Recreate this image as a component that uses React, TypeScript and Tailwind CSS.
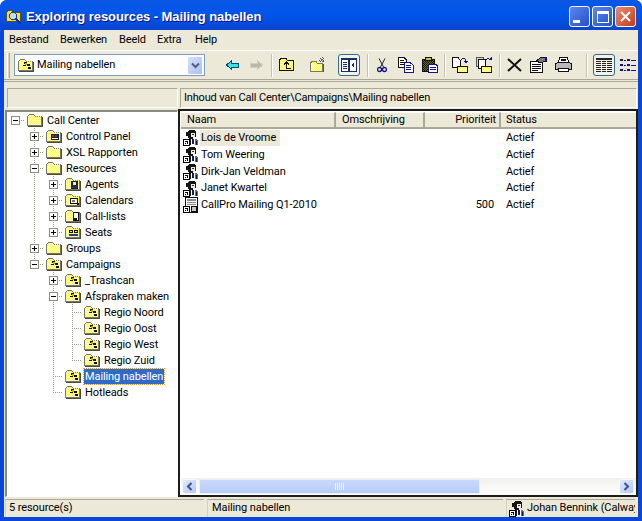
import React from 'react';

const ui = "font-['Roboto',sans-serif] text-[11px] tracking-[-0.1px] text-black";

// pixel checker used for the old 16 colour folder fill
function checker(x0: number, y0: number, w: number, h: number) {
  let d = '';
  for (let y = y0; y < y0 + h; y++) {
    for (let x = x0; x < x0 + w; x++) {
      if ((x + y) % 2 === 0) d += `M${x} ${y}h1v1h-1z`;
    }
  }
  return d;
}

const folderDither = checker(1, 3, 13, 9);
const tabDither = checker(3, 2, 4, 1);
const yellow = '#ffff58';
const pale = '#ffffb8';

type Overlay = 'none' | 'panel' | 'agents' | 'calendars' | 'lists' | 'seats' | 'campaign';

function Folder({ overlay = 'none' }: { overlay?: Overlay }) {
  return (
    <svg width="16" height="14" viewBox="0 0 16 14" shapeRendering="crispEdges" className="shrink-0">
      <path d="M0.5 3.5 L2.5 1.5 H6.5 L8.5 3.5 H14.5 V12.5 H0.5 Z" fill={yellow} stroke="#77776a" />
      <path d={folderDither} fill={pale} />
      <path d={tabDither} fill={pale} />
      <rect x="1" y="13" width="15" height="1" fill="#4a4a40" />
      <rect x="15" y="4" width="1" height="9" fill="#4a4a40" />
      {overlay === 'panel' && (
        <g>
          <rect x="5" y="5" width="8" height="6" fill="#222" />
          <rect x="6" y="6" width="2" height="2" fill="#d22" />
          <rect x="9" y="6" width="2" height="2" fill="#2a48c8" />
          <rect x="6" y="9" width="6" height="1" fill="#fff" />
        </g>
      )}
      {overlay === 'agents' && (
        <g>
          <rect x="6" y="4" width="7" height="8" fill="#222" />
          <rect x="8" y="5" width="3" height="3" fill="#f2e6cc" />
          <rect x="7" y="9" width="5" height="2" fill="#20307a" />
        </g>
      )}
      {overlay === 'calendars' && (
        <g>
          <rect x="5.5" y="5.5" width="7" height="5" fill={pale} stroke="#111" />
          <rect x="7" y="7" width="3" height="2" fill="#777" />
          <rect x="12" y="10" width="2" height="2" fill="#111" />
        </g>
      )}
      {overlay === 'lists' && (
        <g>
          <rect x="8.5" y="3.5" width="5" height="8" fill="#fff" stroke="#111" />
          <rect x="9" y="9" width="3" height="2" fill="#111" />
        </g>
      )}
      {overlay === 'seats' && (
        <g>
          <rect x="4" y="5" width="4" height="3" fill="#111" />
          <rect x="9" y="5" width="4" height="3" fill="#111" />
          <rect x="5" y="6" width="2" height="1" fill="#ffe040" />
          <rect x="10" y="6" width="2" height="1" fill="#ffe040" />
          <rect x="4" y="9" width="9" height="2" fill="#2a3a98" />
        </g>
      )}
      {overlay === 'campaign' && (
        <g>
          <rect x="6" y="4" width="3" height="2" fill="#111" />
          <rect x="9" y="6" width="3" height="2" fill="#111" />
          <rect x="5" y="7" width="3" height="1" fill="#111" />
          <rect x="10" y="9" width="3" height="2" fill="#111" />
          <rect x="7" y="5" width="2" height="2" fill="#c8b020" />
        </g>
      )}
    </svg>
  );
}

type Guide = 'blank' | 'pipe' | 'tee' | 'corner';

// one 19px wide column of the tree's dotted lines, optionally with the +/- box on it
function TreeCell({ guide, box, rootTail }: { guide: Guide; box?: '+' | '-'; rootTail?: boolean }) {
  const vert = guide === 'pipe' || guide === 'tee' || guide === 'corner';
  const bottom = guide === 'pipe' || guide === 'tee';
  const dash = { stroke: '#9a9a8c', strokeDasharray: '1 1', shapeRendering: 'crispEdges' as const };
  return (
    <svg width="19" height="16" viewBox="0 0 19 16" className="shrink-0 block">
      {vert && <line x1="9.5" y1="0" x2="9.5" y2={bottom ? 16 : 8} {...dash} />}
      {guide !== 'blank' && guide !== 'pipe' && <line x1="9" y1="8.5" x2="21" y2="8.5" {...dash} />}
      {rootTail && <line x1="9" y1="8.5" x2="21" y2="8.5" {...dash} />}
      {box && (
        <g shapeRendering="crispEdges">
          <rect x="5.5" y="4.5" width="8" height="8" fill="#fff" stroke="#8f8f80" />
          <rect x="7" y="8" width="5" height="1" fill="#000" />
          {box === '+' && <rect x="9" y="6" width="1" height="5" fill="#000" />}
        </g>
      )}
    </svg>
  );
}

type TreeRow = {
  label: string;
  guides: Guide[];
  box?: '+' | '-';
  overlay?: Overlay;
  selected?: boolean;
};

const rows: TreeRow[] = [
  { label: 'Call Center', guides: ['blank'], box: '-' },
  { label: 'Control Panel', guides: ['blank', 'tee'], box: '+', overlay: 'panel' },
  { label: 'XSL Rapporten', guides: ['blank', 'tee'], box: '+' },
  { label: 'Resources', guides: ['blank', 'tee'], box: '-' },
  { label: 'Agents', guides: ['blank', 'pipe', 'tee'], box: '+', overlay: 'agents' },
  { label: 'Calendars', guides: ['blank', 'pipe', 'tee'], box: '+', overlay: 'calendars' },
  { label: 'Call-lists', guides: ['blank', 'pipe', 'tee'], box: '+', overlay: 'lists' },
  { label: 'Seats', guides: ['blank', 'pipe', 'corner'], box: '+', overlay: 'seats' },
  { label: 'Groups', guides: ['blank', 'tee'], box: '+' },
  { label: 'Campaigns', guides: ['blank', 'corner'], box: '-', overlay: 'campaign' },
  { label: '_Trashcan', guides: ['blank', 'blank', 'tee'], box: '+', overlay: 'campaign' },
  { label: 'Afspraken maken', guides: ['blank', 'blank', 'tee'], box: '-', overlay: 'campaign' },
  { label: 'Regio Noord', guides: ['blank', 'blank', 'pipe', 'tee'], overlay: 'campaign' },
  { label: 'Regio Oost', guides: ['blank', 'blank', 'pipe', 'tee'], overlay: 'campaign' },
  { label: 'Regio West', guides: ['blank', 'blank', 'pipe', 'tee'], overlay: 'campaign' },
  { label: 'Regio Zuid', guides: ['blank', 'blank', 'pipe', 'corner'], overlay: 'campaign' },
  { label: 'Mailing nabellen', guides: ['blank', 'blank', 'tee'], overlay: 'campaign', selected: true },
  { label: 'Hotleads', guides: ['blank', 'blank', 'corner'], overlay: 'campaign' },
];

function Tree() {
  return (
    <div className="flex-1 min-h-0 -ml-[1px] bg-white border-t-2 border-l-2 border-t-[#8a8a7c] border-l-[#8a8a7c] border-r border-b border-r-white border-b-white overflow-hidden">
      {rows.map((r, i) => (
        <div key={r.label} className="flex items-center h-4 -ml-[1px] whitespace-nowrap">
          {r.guides.map((g, j) => {
            const last = j === r.guides.length - 1;
            return <TreeCell key={j} guide={g} box={last ? r.box : undefined} rootTail={i === 0 && last} />;
          })}
          <div className="ml-[2px] mr-[3px]">
            <Folder overlay={r.overlay} />
          </div>
          <span
            className={
              r.selected
                ? 'px-[1px] h-[15px] leading-[15px] bg-[#316ac5] text-white outline-1 outline-dotted outline-[#e0a030]'
                : 'px-[1px] h-[15px] leading-[15px]'
            }
          >
            {r.label}
          </span>
        </div>
      ))}
    </div>
  );
}

function ShortcutArrow() {
  return (
    <g shapeRendering="crispEdges">
      <rect x="0.5" y="9.5" width="6" height="6" fill="#fff" stroke="#000" />
      <rect x="2" y="11" width="3" height="1" fill="#000" />
      <rect x="4" y="11" width="1" height="3" fill="#000" />
      <rect x="2" y="13" width="1" height="1" fill="#000" />
    </g>
  );
}

function AgentIcon() {
  return (
    <svg width="16" height="16" viewBox="0 0 16 16" shapeRendering="crispEdges" className="shrink-0">
      <path d="M6 0 H12 V1 H13 V7 H11 V9 H6 V8 H5 V6 H3 V2 H5 V1 H6 Z" fill="#141414" />
      <rect x="8" y="3" width="4" height="4" fill="#f4ecd8" />
      <rect x="9" y="4" width="2" height="1" fill="#333" />
      <rect x="10" y="7" width="1" height="2" fill="#f4ecd8" />
      <path d="M4 9 H14 L15 11 V15 H4 Z" fill="#6a6a78" />
      <rect x="8" y="9" width="4" height="6" fill="#fff" />
      <rect x="9" y="9" width="2" height="5" fill="#141c60" />
      <rect x="4" y="9" width="4" height="6" fill="#1a1a24" />
      <rect x="13" y="11" width="1" height="4" fill="#1a1a24" />
      <ShortcutArrow />
    </svg>
  );
}

function MailingIcon() {
  return (
    <svg width="16" height="16" viewBox="0 0 16 16" shapeRendering="crispEdges" className="shrink-0">
      <rect x="2.5" y="0.5" width="12" height="15" fill="#fff" stroke="#111" />
      <rect x="4" y="2" width="9" height="2" fill="#8a8a8a" />
      <rect x="4" y="5" width="9" height="1" fill="#8a8a8a" />
      <rect x="4" y="7" width="9" height="1" fill="#8a8a8a" />
      <rect x="8" y="9.5" width="5" height="5" fill="#c8c8c8" stroke="#111" />
      <ShortcutArrow />
    </svg>
  );
}

const people = ['Lois de Vroome', 'Tom Weering', 'Dirk-Jan Veldman', 'Janet Kwartel'];

function ListRow({ name, prio, icon, active }: { name: string; prio?: string; icon: React.ReactNode; active?: boolean }) {
  return (
    <div className="flex items-center h-[16.75px]">
      <div className="w-[154px] pl-[2px] flex items-center shrink-0">
        {icon}
        <span className={active ? 'ml-[1px] pl-[1px] pr-[4px] h-4 leading-4 bg-[#ece9d8]' : 'ml-[1px] pl-[1px]'}>{name}</span>
      </div>
      <div className="w-[89px] shrink-0" />
      <div className="w-[75px] shrink-0 text-right pr-[5px]">{prio}</div>
      <div className="pl-[7px]">Actief</div>
    </div>
  );
}

function HeaderCell({ label, w, right }: { label: string; w: string; right?: boolean }) {
  return (
    <div
      className={`${w} ${right ? 'justify-end pr-[3px]' : 'pl-[6px]'} shrink-0 h-full flex items-center border-r-2 border-r-[#aca899] border-t border-t-white`}
    >
      {label}
    </div>
  );
}

function ScrollButton({ dir }: { dir: 'l' | 'r' }) {
  return (
    <div className="w-[15px] h-[15px] shrink-0 rounded-[2px] bg-gradient-to-br from-[#e1eafe] to-[#b4c8f6] border border-[#f4f7fe] flex items-center justify-center">
      <svg width="7" height="9" viewBox="0 0 7 9">
        <path d={dir === 'l' ? 'M5.5 1 L2 4.5 L5.5 8' : 'M1.5 1 L5 4.5 L1.5 8'} fill="none" stroke="#3d5387" strokeWidth="2" />
      </svg>
    </div>
  );
}

function List() {
  return (
    <div className="flex-1 min-h-0 -ml-[2px] flex flex-col bg-white border-2 border-[#1c1c1c] pt-[1px] pl-[1px]">
      <div className="h-[17px] flex bg-[#ece9d8] border-b-2 border-b-[#aca899] shrink-0">
        <HeaderCell label="Naam" w="w-[155px]" />
        <HeaderCell label="Omschrijving" w="w-[89px]" />
        <HeaderCell label="Prioriteit" w="w-[76px]" right />
        <div className="pl-[5px] flex items-center border-t border-t-white flex-1">Status</div>
      </div>
      <div className="flex-1 min-h-0 pt-[1px]">
        {people.map((p, i) => (
          <ListRow key={p} name={p} icon={<AgentIcon />} active={i === 0} />
        ))}
        <ListRow name="CallPro Mailing Q1-2010" prio="500" icon={<MailingIcon />} />
      </div>
      <div className="h-[17px] shrink-0 flex items-center gap-[2px] pl-[1px] pr-[2px] bg-gradient-to-b from-[#f3f1ec] to-[#fefefb]">
        <ScrollButton dir="l" />
        <div className="w-[281px] h-[15px] rounded-[2px] bg-gradient-to-b from-[#c9d8fb] to-[#b8cdf8] border border-[#e8eefc] flex items-center justify-center gap-[1px]">
          {[0, 1, 2, 3, 4].map(i => (
            <span key={i} className="w-[1px] h-[7px] bg-[#eef3ff]" />
          ))}
        </div>
        <div className="flex-1" />
        <ScrollButton dir="r" />
      </div>
    </div>
  );
}

function Sep({ ml, mr }: { ml: string; mr: string }) {
  return <div className={`${ml} ${mr} w-[2px] h-[23px] shrink-0 bg-[#c5c2b0] border-r border-r-white`} />;
}

function ToggleBtn({ children, ml }: { children: React.ReactNode; ml: string }) {
  return (
    <div className={`${ml} w-[22px] h-[22px] shrink-0 rounded-[3px] border border-[#2f6a94] bg-[#f4f2e8] flex items-center justify-center`}>
      {children}
    </div>
  );
}

function Ico({ ml, w = 16, children }: { ml: string; w?: number; children: React.ReactNode }) {
  return (
    <svg width={w} height="16" viewBox={`0 0 ${w} 16`} shapeRendering="crispEdges" className={`${ml} shrink-0`}>
      {children}
    </svg>
  );
}

const smallDither = checker(6, 11, 9, 4);

function Toolbar() {
  return (
    <div className="h-[32px] flex items-center shrink-0 border-t border-t-white border-b-[3px] border-double border-b-[#aca899]">
      <div className="ml-[3px] w-[3px] h-[25px] border-l border-l-white border-r border-r-[#aca899] bg-[#d8d4c0] shrink-0" />
      <div className="ml-[4px] w-[191px] h-[22px] shrink-0 bg-white border border-[#7f9db9] flex items-center">
        <div className="ml-[3px] mr-[3px]">
          <Folder overlay="campaign" />
        </div>
        <span className="flex-1">Mailing nabellen</span>
        <div className="w-[16px] h-[19px] mr-[1px] rounded-[2px] bg-gradient-to-br from-[#d5e0fb] to-[#aebff0] border border-white flex items-center justify-center">
          <svg width="9" height="7" viewBox="0 0 9 7">
            <path d="M1 1.5 L4.5 5 L8 1.5" fill="none" stroke="#4d6185" strokeWidth="2" />
          </svg>
        </div>
      </div>

      {/* back / forward */}
      <svg width="13" height="10" viewBox="0 0 13 10" shapeRendering="crispEdges" className="ml-[21px] shrink-0">
        <path d="M0.5 5 L5.5 0.5 V3 H12.5 V7 H5.5 V9.5 Z" fill="#36e4e4" stroke="#004a78" />
      </svg>
      <svg width="13" height="10" viewBox="0 0 13 10" shapeRendering="crispEdges" className="ml-[11px] shrink-0">
        <path d="M12.5 5 L7.5 0.5 V3 H0.5 V7 H7.5 V9.5 Z" fill="#b9b7a6" stroke="#d0cebe" />
      </svg>
      <Sep ml="ml-[8px]" mr="mr-[6px]" />

      <Ico ml="">
        <path d="M0.5 3 L2 1.5 H7 L8 3 H14.5 V13.5 H0.5 Z" fill={yellow} stroke="#111" />
        <path d={checker(1, 4, 13, 9)} fill={pale} />
        <path d="M7.5 11.5 V5 M5 7.5 L7.5 5 L10 7.5 M7 11.5 H12" stroke="#111" fill="none" />
      </Ico>
      <Ico ml="ml-[15px]">
        <path d="M0.5 6 L2 4.5 H6 L7 6 H12.5 V14.5 H0.5 Z" fill={yellow} stroke="#77776a" />
        <path d={checker(1, 7, 11, 7)} fill={pale} />
        <rect x="13" y="7" width="1" height="8" fill="#555" />
        <path d="M12 0 V6 M9 3 H15 M10 1 L14 5 M14 1 L10 5" stroke="#555" strokeDasharray="1 1" />
      </Ico>
      <ToggleBtn ml="ml-[12px]">
        <svg width="16" height="14" viewBox="0 0 16 14" shapeRendering="crispEdges">
          <rect x="0.5" y="0.5" width="15" height="13" fill="#fff" stroke="#1c2f6c" strokeWidth="1" />
          <rect x="0" y="0" width="16" height="2" fill="#1c2f6c" />
          <rect x="7" y="0" width="2" height="14" fill="#1c2f6c" />
          <path d="M2 4 H6 M2 6 H6 M2 8 H6 M2 10 H6" stroke="#1c2f6c" />
          <path d="M13 4 V10 L10 7 Z" fill="#1c2f6c" />
        </svg>
      </ToggleBtn>
      <Sep ml="ml-[7px]" mr="mr-[7px]" />

      <svg width="10" height="15" viewBox="0 0 10 15" className="ml-[1px] shrink-0">
        <path d="M2 0.5 L6.5 9 M8 0.5 L3.5 9" stroke="#222" fill="none" />
        <circle cx="2.5" cy="11.5" r="2" fill="none" stroke="#14148a" strokeWidth="1.3" />
        <circle cx="7.5" cy="11.5" r="2" fill="none" stroke="#14148a" strokeWidth="1.3" />
      </svg>
      <Ico ml="ml-[11px]">
        <path d="M0.5 0.5 H6 L8.5 3 V10.5 H0.5 Z" fill="#fff" stroke="#111" />
        <path d="M2 3 H6 M2 5 H7 M2 7 H7" stroke="#111" />
        <path d="M6.5 5.5 H12 L15 8 V15 H6.5 Z" fill="#fff" stroke="#14148a" />
        <path d="M8 8 H13 M8 10 H13 M8 12 H13" stroke="#14148a" />
      </Ico>
      <Ico ml="ml-[7px]" w={17}>
        <rect x="1" y="2" width="12" height="12" fill="#6b6b10" stroke="#111" />
        <path d={checker(2, 3, 11, 11)} fill="#111" />
        <rect x="4" y="0.5" width="6" height="3" fill="#c8c050" stroke="#111" />
        <path d="M7.5 7.5 H15 L16.5 9 V15.5 H7.5 Z" fill="#fff" stroke="#14148a" />
        <path d="M9 10 H15 M9 12 H15" stroke="#14148a" />
      </Ico>
      <Sep ml="ml-[6px]" mr="mr-[6px]" />

      <Ico ml="" w={17}>
        <path d="M0.5 0.5 H6 L8 3 V10 H0.5 Z" fill="#fff" stroke="#111" />
        <path d="M5 9.5 H15.5 V15.5 H5 Z" fill={yellow} stroke="#111" />
        <path d={smallDither} fill={pale} />
        <path d="M9 3 C11 0 13 1 14 4" stroke="#14148a" fill="none" />
        <path d="M12 4 H16 L14 7 Z" fill="#14148a" />
      </Ico>
      <Ico ml="ml-[7px]" w={17}>
        <rect x="0.5" y="0.5" width="7" height="9" fill="#d8d8d8" stroke="#555" />
        <rect x="2.5" y="2.5" width="7" height="9" fill="#fff" stroke="#111" />
        <path d="M5 9.5 H15.5 V15.5 H5 Z" fill={yellow} stroke="#111" />
        <path d={smallDither} fill={pale} />
        <path d="M10 3 C11 1 13 1 14 3" stroke="#14148a" fill="none" />
        <path d="M12 3 H16 V0 Z" fill="#14148a" />
      </Ico>
      <Sep ml="ml-[6px]" mr="mr-[6px]" />

      <svg width="15" height="14" viewBox="0 0 15 14" className="shrink-0">
        <path d="M1 1 L14 13 M14 1 L1 13" stroke="#111" strokeWidth="2" />
      </svg>
      <Ico ml="ml-[8px]" w={17}>
        <path d="M0.5 4.5 H12.5 V15 H0.5 Z" fill="#fff" stroke="#111" />
        <path d="M2 7 H11 M2 9 H11 M2 11 H11 M2 13 H8" stroke="#111" />
        <path d="M6 4 L11 0.5 H15 V4 L11 6 Z" fill="#7a7a7a" stroke="#111" />
        <rect x="15" y="0" width="2" height="5" fill="#14148a" />
      </Ico>
      <Ico ml="ml-[8px]" w={17}>
        <path d="M4.5 0.5 H12.5 L13.5 5 H3.5 Z" fill="#fff" stroke="#111" />
        <path d="M0.5 7 L3 5 H14 L16.5 7 V12.5 H0.5 Z" fill="#b8b8b8" stroke="#111" />
        <rect x="3.5" y="11" width="10" height="3.5" fill="#fff" stroke="#111" />
        <path d="M6 2 H11 M6 3.5 H11" stroke="#111" />
      </Ico>
      <Sep ml="ml-[14px]" mr="mr-[5px]" />

      <ToggleBtn ml="">
        <svg width="16" height="14" viewBox="0 0 16 14" shapeRendering="crispEdges">
          <rect x="0" y="0" width="16" height="2" fill="#222" />
          <path d="M0 3.5 H16 M0 5.5 H16 M0 7.5 H16 M0 9.5 H16 M0 11.5 H16 M0 13.5 H16" stroke="#222" />
          <path d="M5.5 2 V14 M10.5 2 V14" stroke="#f4f2e8" />
        </svg>
      </ToggleBtn>
      <svg width="18" height="14" viewBox="0 0 18 14" shapeRendering="crispEdges" className="ml-[5px] shrink-0">
        <path d="M0 1 H3 V3 H0 Z M0 6 H3 V8 H0 Z M0 11 H3 V13 H0 Z M7 1 H10 V3 H7 Z M7 6 H10 V8 H7 Z M7 11 H10 V13 H7 Z" fill="#14148a" />
        <path d="M4 2.5 H6 M4 7.5 H6 M4 12.5 H6 M11 2.5 H16 M11 7.5 H16 M11 12.5 H16" stroke="#14148a" />
      </svg>
    </div>
  );
}

function CaptionBtn({ bg, children, ml }: { bg: string; children: React.ReactNode; ml?: string }) {
  return (
    <div className={`${bg} ${ml ?? ''} w-[21px] h-[21px] rounded-[3px] border border-white flex items-center justify-center shrink-0`}>
      {children}
    </div>
  );
}

function TitleBar() {
  return (
    <div className="h-[30px] shrink-0 flex items-center pl-[6px] pr-[6px] pt-[3px] bg-gradient-to-b from-[#0a57e4] via-[#0055ea] to-[#0a44cf]">
      <svg width="16" height="16" viewBox="0 0 16 16" shapeRendering="crispEdges" className="shrink-0">
        <path d="M0.5 3.5 L2 1.5 H6 L7.5 3.5 H14.5 V12.5 H0.5 Z" fill="#f2dc5a" stroke="#55501c" />
        <circle cx="7" cy="7" r="3.5" fill="#b8e0f8" stroke="#2a3a5a" />
        <path d="M10 10 L15 15" stroke="#1030b0" strokeWidth="2" />
      </svg>
      <span className="ml-[4px] flex-1 font-['Liberation_Sans',sans-serif] text-[13px] tracking-[-0.08px] font-bold text-white [text-shadow:1px_1px_0_#0f1089]">
        Exploring resources - Mailing nabellen
      </span>
      <CaptionBtn bg="bg-gradient-to-br from-[#5d86f0] to-[#2450c8]">
        <span className="w-[7px] h-[3px] mt-[9px] mr-[6px] bg-white" />
      </CaptionBtn>
      <CaptionBtn ml="ml-[2px]" bg="bg-gradient-to-br from-[#5d86f0] to-[#2450c8]">
        <span className="w-[12px] h-[12px] border border-white border-t-[3px]" />
      </CaptionBtn>
      <CaptionBtn ml="ml-[2px]" bg="bg-gradient-to-br from-[#ec8a6c] to-[#c23a14]">
        <svg width="11" height="11" viewBox="0 0 11 11">
          <path d="M1 1 L10 10 M10 1 L1 10" stroke="#fff" strokeWidth="2" />
        </svg>
      </CaptionBtn>
    </div>
  );
}

function PaneHeader({ children, className }: { children?: React.ReactNode; className?: string }) {
  return (
    <div className={`h-[20px] shrink-0 flex items-center pl-[3px] border border-t-[#aca899] border-l-[#aca899] border-r-white border-b-white whitespace-nowrap ${className ?? ''}`}>
      {children}
    </div>
  );
}

function StatusCell({ w, children }: { w: string; children: React.ReactNode }) {
  return (
    <div className={`${w} shrink-0 h-full flex items-center border-t border-t-[#aca899] border-l border-l-[#d5d2c0] overflow-hidden whitespace-nowrap`}>
      {children}
    </div>
  );
}

const menuItems = [
  { label: 'Bestand', w: 'w-[51px]' },
  { label: 'Bewerken', w: 'w-[59px]' },
  { label: 'Beeld', w: 'w-[38px]' },
  { label: 'Extra', w: 'w-[38px]' },
  { label: 'Help', w: 'w-[38px]' },
];

export default function App() {
  return (
    <div className="w-[642px] h-[521px] bg-white">
      <div className={`${ui} w-[642px] h-[521px] rounded-t-[7px] overflow-hidden flex flex-col bg-[#0847d8]`}>
        <TitleBar />
        <div className="flex-1 min-h-0 mx-[4px] mb-[4px] flex flex-col bg-[#ece9d8]">
          <div className="h-[20px] shrink-0 flex items-center pl-[5px]">
            {menuItems.map(m => (
              <span key={m.label} className={m.w}>{m.label}</span>
            ))}
          </div>
          <Toolbar />
          <div className="flex-1 min-h-0 flex pt-[6px] pl-[2px] gap-[2px]">
            <div className="w-[172px] shrink-0 flex flex-col gap-[2px]">
              <PaneHeader className="ml-[1px]" />
              <Tree />
            </div>
            <div className="flex-1 min-w-0 flex flex-col gap-[1px]">
              <PaneHeader className="mr-[1px] tracking-[-0.17px]">Inhoud van Call Center\Campaigns\Mailing nabellen</PaneHeader>
              <List />
            </div>
          </div>
          <div className="h-[18px] shrink-0 flex mt-[2px] gap-[3px] pl-[1px]">
            <StatusCell w="w-[199px]">
              <span className="pl-[3px]">5 resource(s)</span>
            </StatusCell>
            <StatusCell w="w-[296px]">
              <span className="pl-[4px]">Mailing nabellen</span>
            </StatusCell>
            <StatusCell w="w-[129px]">
              <span className="pl-[2px] pr-[2px]">
                <AgentIcon />
              </span>
              <span>Johan Bennink (Calway)</span>
            </StatusCell>
          </div>
        </div>
      </div>
    </div>
  );
}
